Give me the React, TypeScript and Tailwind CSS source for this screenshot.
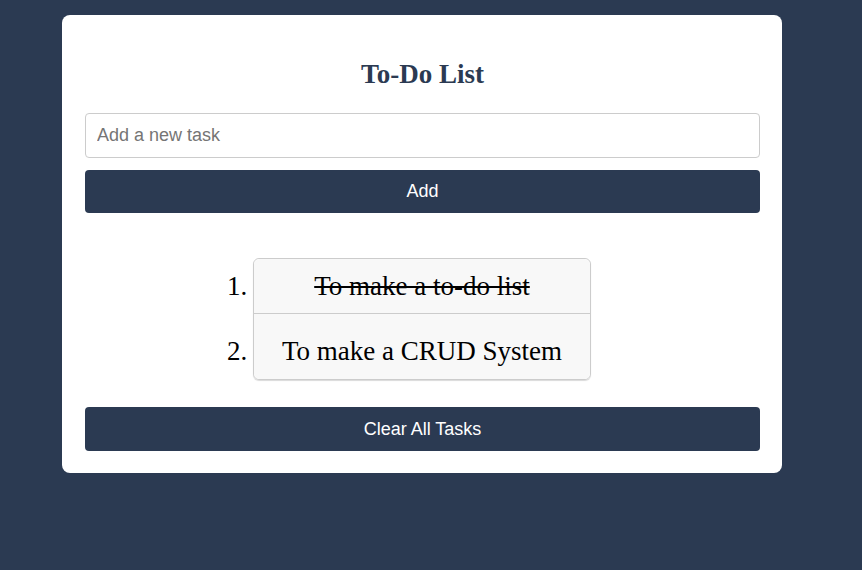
import React, { useState } from 'react';

type Task = { text: string; done: boolean };

export default function App() {
  const [tasks, setTasks] = useState<Task[]>([
    { text: 'To make a to-do list', done: true },
    { text: 'To make a CRUD System', done: false },
  ]);
  const [value, setValue] = useState('');

  const addTask = () => {
    if (!value.trim()) return;
    setTasks([...tasks, { text: value.trim(), done: false }]);
    setValue('');
  };

  return (
    <div className="min-h-[570px] w-full bg-[#2b3a52] pt-[15px]">
      <div className="ml-[62px] w-[720px] rounded-lg bg-white pl-[23px] pr-[22px] pt-[44px] pb-[22px]">
        <h2 className="h-[31px] text-center text-[27px] leading-[31px] font-bold text-[#2b3a52] [font-family:'Liberation_Serif',serif]">
          To-Do List
        </h2>

        <input
          value={value}
          onChange={(e) => setValue(e.target.value)}
          placeholder="Add a new task"
          className="mt-[23px] block h-[45px] w-full rounded border border-[#cccccc] px-[11px] text-[18px] text-black outline-none placeholder:text-[#757575] [font-family:'Liberation_Sans',Arial,sans-serif]"
        />
        <button
          onClick={addTask}
          className="mt-[12px] block h-[43px] w-full rounded bg-[#2b3a52] text-[18px] text-white [font-family:'Liberation_Sans',Arial,sans-serif]"
        >
          Add
        </button>

        {/* task list */}
        <ol className="ml-[168px] mt-[45px] w-[338px] list-decimal rounded-md border border-[#cccccc] shadow-[0_1px_1px_rgba(0,0,0,0.15)] text-[27px] leading-[31px] text-black [font-family:'Liberation_Serif',serif]">
          {tasks.map((t, i) => (
            <li
              key={i}
              onClick={() =>
                setTasks(tasks.map((x, j) => (j === i ? { ...x, done: !x.done } : x)))
              }
              className={`cursor-pointer bg-[#f8f8f8] text-center ${
                i === 0 ? 'rounded-t-md' : ''
              } ${i === tasks.length - 1 ? 'rounded-b-md pt-[22px] pb-[12px]' : 'border-b border-[#cccccc] pt-[12px] pb-[11px]'}`}
            >
              <span className={t.done ? 'line-through' : ''}>{t.text}</span>
            </li>
          ))}
        </ol>

        <button
          onClick={() => setTasks([])}
          className="mt-[27px] block h-[44px] w-full rounded bg-[#2b3a52] text-[18px] text-white [font-family:'Liberation_Sans',Arial,sans-serif]"
        >
          Clear All Tasks
        </button>
      </div>
    </div>
  );
}
